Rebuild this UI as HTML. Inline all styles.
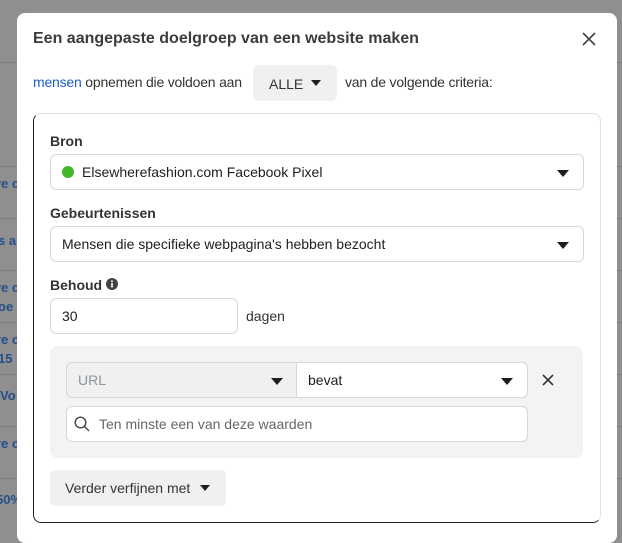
<!DOCTYPE html>
<html><head><style>
*{box-sizing:border-box;margin:0;padding:0}
body{width:622px;height:530px;background:#8f8f8f;font-family:"Liberation Sans",Arial,sans-serif;position:relative;overflow:hidden;color:#1c1e21}
.bgl{position:absolute;height:1px;background:#7d7d7d}
.bgt{position:absolute;color:#23508a;font-size:13px;font-weight:bold}
.modal{position:absolute;left:17px;top:13px;width:600px;height:530px;background:#fff;border-radius:8px}
.a{position:absolute}
.title{left:16px;top:17px;font-size:16px;font-weight:bold;color:#3a3b3c}
.sel{position:absolute;border:1px solid #d6d7d9;border-radius:6px;background:#fff;font-size:14px;color:#1c1e21;padding-left:11px;display:flex;align-items:center}
.tri{position:absolute;width:0;height:0;border-left:6px solid transparent;border-right:6px solid transparent;border-top:7px solid #1c1e21}
.lbl{font-size:14px;font-weight:bold;color:#333}
</style></head><body>
<div class="bgl" style="left:0;top:62px;width:622px"></div>
<div class="bgl" style="left:0;top:166px;width:622px"></div>
<div class="bgl" style="left:0;top:218px;width:622px"></div>
<div class="bgl" style="left:0;top:270px;width:622px"></div>
<div class="bgl" style="left:0;top:322px;width:622px"></div>
<div class="bgl" style="left:0;top:374px;width:622px"></div>
<div class="bgl" style="left:0;top:426px;width:622px"></div>
<div class="bgl" style="left:0;top:478px;width:622px"></div>
<div class="bgt" style="left:-4px;top:176px">re c</div>
<div class="bgt" style="left:-2px;top:233px">s a</div>
<div class="bgt" style="left:-4px;top:280px">re c</div>
<div class="bgt" style="left:-2px;top:299px">oe</div>
<div class="bgt" style="left:-4px;top:332px">re c</div>
<div class="bgt" style="left:-2px;top:351px">15</div>
<div class="bgt" style="left:0;top:388px">Vo</div>
<div class="bgt" style="left:-4px;top:436px">re c</div>
<div class="bgt" style="left:-4px;top:492px">50%</div>
<div class="modal">
 <div class="a title">Een aangepaste doelgroep van een website maken</div>
 <svg class="a" style="left:565px;top:19px" width="14" height="14" viewBox="0 0 14 14"><path d="M1 1L13 13M13 1L1 13" stroke="#444" stroke-width="1.6"/></svg>
 <div class="a" style="left:16px;top:61px;font-size:14px;color:#333;letter-spacing:-0.2px"><span style="color:#1d5fbf">mensen</span> opnemen die voldoen aan</div>
 <div class="a" style="left:236px;top:52px;width:84px;height:36px;background:#f0f0f0;border-radius:6px;font-size:14px;color:#333;padding:11px 0 0 16px">ALLE</div>
 <div class="tri" style="left:294px;top:67px;border-left-width:5px;border-right-width:5px;border-top-width:6px"></div>
 <div class="a" style="left:328px;top:61px;font-size:14px;color:#333;letter-spacing:-0.2px">van de volgende criteria:</div>
 <div class="a" style="left:16px;top:100px;width:568px;height:410px;border:1px solid #e2e3e5;border-left:1.5px solid #222;border-bottom:1.5px solid #222;border-radius:8px"></div>
 <div class="a lbl" style="left:33px;top:120px">Bron</div>
 <div class="sel" style="left:33px;top:141px;width:534px;height:36px"><span style="display:inline-block;width:12px;height:12px;border-radius:50%;background:#42b72a;margin-right:8px"></span>Elsewherefashion.com Facebook Pixel</div>
 <div class="tri" style="left:540px;top:157px"></div>
 <div class="a lbl" style="left:33px;top:192px">Gebeurtenissen</div>
 <div class="sel" style="left:33px;top:213px;width:534px;height:36px">Mensen die specifieke webpagina's hebben bezocht</div>
 <div class="tri" style="left:540px;top:229px"></div>
 <div class="a lbl" style="left:33px;top:264px">Behoud</div>
 <svg class="a" style="left:89px;top:265px" width="12" height="12" viewBox="0 0 12 12"><circle cx="6" cy="6" r="6" fill="#444"/><rect x="5.2" y="5" width="1.6" height="4.5" fill="#fff"/><circle cx="6" cy="3.2" r="1" fill="#fff"/></svg>
 <div class="sel" style="left:33px;top:285px;width:188px;height:36px">30</div>
 <div class="a" style="left:229px;top:295px;font-size:14px;color:#333">dagen</div>
 <div class="a" style="left:33px;top:333px;width:533px;height:112px;background:#f2f3f5;border-radius:8px"></div>
 <div class="sel" style="left:49px;top:349px;width:231px;height:36px;background:#f0f0f0;color:#8d949e;border-radius:6px 0 0 6px">URL</div>
 <div class="tri" style="left:254px;top:365px"></div>
 <div class="sel" style="left:279px;top:349px;width:232px;height:36px;border-radius:0 6px 6px 0">bevat</div>
 <div class="tri" style="left:484px;top:365px"></div>
 <svg class="a" style="left:525px;top:361px" width="12" height="12" viewBox="0 0 12 12"><path d="M1 1L11 11M11 1L1 11" stroke="#333" stroke-width="1.6"/></svg>
 <div class="sel" style="left:49px;top:393px;width:462px;height:36px;color:#666;padding-left:32px">Ten minste een van deze waarden</div>
 <svg class="a" style="left:57px;top:403px" width="16" height="16" viewBox="0 0 16 16"><circle cx="6.5" cy="6.5" r="5.3" fill="none" stroke="#444" stroke-width="1.4"/><path d="M10.3 10.3L15 15" stroke="#444" stroke-width="1.4"/></svg>
 <div class="a" style="left:33px;top:457px;width:176px;height:36px;background:#f0f0f0;border-radius:6px;font-size:14px;color:#333;padding:10px 0 0 15px">Verder verfijnen met</div>
 <div class="tri" style="left:183px;top:472px;border-left-width:5px;border-right-width:5px;border-top-width:6px"></div>
</div>
</body></html>
